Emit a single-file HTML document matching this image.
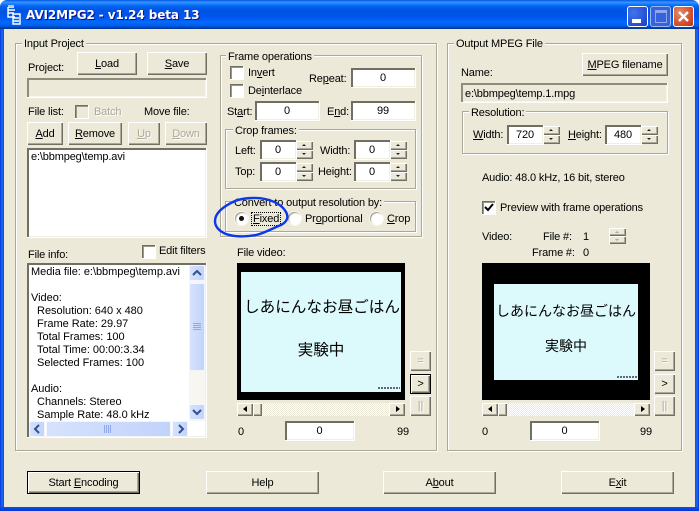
<!DOCTYPE html>
<html><head><meta charset="utf-8"><style>
html,body{margin:0;padding:0;background:#fff}
#w{position:relative;width:699px;height:511px;overflow:hidden;background:#ece9d8;font:11px/12px "Liberation Sans","Noto Sans CJK JP",sans-serif;letter-spacing:-.15px;color:#000;border-radius:7px 7px 0 0}
#w div{position:absolute;box-sizing:border-box;white-space:nowrap}
.tb{left:0;top:0;width:699px;height:29px;background:linear-gradient(#0058e6 0,#3a93ff 8%,#127dff 14%,#0262ee 22%,#0054e3 35%,#0055eb 56%,#005bf5 66%,#026afe 76%,#0062ef 86%,#0052d6 92%,#0040ab 96%,#003092 100%)}
.bl{left:0;top:29px;width:4px;height:482px;background:linear-gradient(90deg,#0831d9,#166aee 40%,#0855dd)}
.br{left:695px;top:29px;width:4px;height:482px;background:linear-gradient(270deg,#0831d9,#166aee 40%,#0855dd)}
.bb{left:0;top:507px;width:699px;height:4px;background:linear-gradient(#0855dd,#0831d9)}
.tt{left:26px;top:7px;color:#fff;font:bold 12px/16px "DejaVu Sans","Liberation Sans",sans-serif;letter-spacing:-.1px;text-shadow:1px 1px #0f1089}
.g{border:1px solid #aca899;box-shadow:1px 1px #fff,inset 1px 1px #fff}
.l{background:#ece9d8;padding:0 2px;height:12px}
.b{background:#ece9d8;text-align:center;box-shadow:inset 1px 1px #fff,inset -1px -1px #716f64,inset -2px -2px #aca899;display:flex;align-items:center;justify-content:center}
.dis{color:#aca899;text-shadow:1px 1px #fff}
.i{background:#fff;text-align:center;box-shadow:inset 1px 1px #716f64,inset 2px 2px #716f64,inset -1px -1px #f1efe2;border-right:1px solid #fff;border-bottom:1px solid #fff;line-height:21px}
.d{background:#ece9d8;box-shadow:inset 1px 1px #8f8c7c,inset 2px 2px #8f8c7c,inset -1px -1px #f7f6ee;border-right:1px solid #fff;border-bottom:1px solid #fff;text-align:left;padding:5px 0 0 4px}
.c{width:14px;height:14px;box-shadow:inset 1px 1px #716f64,inset 2px 2px #9a9786;border-right:1px solid #fff;border-bottom:1px solid #fff;background:#fff}
.r{width:13px;height:13px;border-radius:50%;background:#fff;box-shadow:inset 1px 1px 1px #a09c8c,0 0 0 1px #f8f7f0}
.s{background:#ece9d8;box-shadow:inset 1px 1px #fff,inset -1px -1px #716f64,inset -2px -2px #aca899}
.up:after{content:"";position:absolute;left:6px;top:3px;border:2.5px solid transparent;border-top:0;border-bottom:2.5px solid #222}
.dn:after{content:"";position:absolute;left:6px;top:3px;border:2.5px solid transparent;border-bottom:0;border-top:2.5px solid #222}
.dim:after{border-top-color:#aca899;border-bottom-color:#aca899}
.lf:after{content:"";position:absolute;left:6px;top:3px;border:3.5px solid transparent;border-left:0;border-right:4px solid #000}
.rt:after{content:"";position:absolute;left:7px;top:3px;border:3.5px solid transparent;border-right:0;border-left:4px solid #000}
.k{background:repeating-conic-gradient(#fff 0 25%,#ece9d8 0 50%) 0 0/2px 2px}
.v{background:#000}.y{background:#dcfafc;overflow:hidden;text-align:center;color:#000}
.xb{background:linear-gradient(90deg,#d6e2fd,#c2d3fb);border:1px solid #f4f6fe;border-radius:2px}
u{text-decoration:underline}
</style></head><body><div id="w">
<div class="tb"></div><div class="bl"></div><div class="br"></div><div class="bb"></div>
<svg style="position:absolute;left:6px;top:5px" width="16" height="20" viewBox="0 0 16 20"><path d="M2 2h6M2 5h7M2 2v10h7M2 8h6M7 9h7v10H7zM7 13h6M7 16h6" fill="none" stroke="#fff" stroke-width="1.4"/><path d="M2 0h6v2H2z" fill="#c8c8c8"/></svg>
<div class="tt">AVI2MPG2 - v1.24 beta 13</div>
<!-- window buttons -->
<div style="left:627px;top:6px;width:21px;height:21px;border:1px solid #fff;border-radius:3px;background:radial-gradient(circle at 30% 30%,#3f76ea,#2a53d8 60%,#1b3bc0)"><div style="left:4px;top:12px;width:9px;height:4px;background:#fff"></div></div>
<div style="left:650px;top:6px;width:21px;height:21px;border:1px solid #9db8f0;border-radius:3px;background:#3761dd"><div style="left:4px;top:3px;width:12px;height:13px;border:1px solid #8fa8ec;border-top-width:3px"></div></div>
<div style="left:673px;top:6px;width:21px;height:21px;border:1px solid #fff;border-radius:3px;background:radial-gradient(circle at 30% 30%,#e6896a,#d5512c 60%,#b9331a)"><svg style="position:absolute;left:3px;top:3px" width="13" height="13"><path d="M2 2l9 9M11 2l-9 9" stroke="#fff" stroke-width="2.4"/></svg></div>

<!-- Input Project -->
<div class="g" style="left:15px;top:43px;width:422px;height:408px"></div>
<div class="l" style="left:22px;top:38px">Input Project</div>
<div style="left:28px;top:62px">Project:</div>
<div class="b" style="left:77px;top:52px;width:60px;height:23px"><span><u>L</u>oad</span></div>
<div class="b" style="left:147px;top:52px;width:60px;height:23px"><span><u>S</u>ave</span></div>
<div class="d" style="left:27px;top:78px;width:180px;height:20px"></div>
<div style="left:28px;top:106px">File list:</div>
<div class="c" style="left:75px;top:105px;background:#ece9d8"></div>
<div class="dis" style="left:94px;top:106px">Batch</div>
<div style="left:144px;top:106px">Move file:</div>
<div class="b" style="left:27px;top:122px;width:36px;height:23px"><span><u>A</u>dd</span></div>
<div class="b" style="left:68px;top:122px;width:54px;height:23px"><span><u>R</u>emove</span></div>
<div class="b dis" style="left:128px;top:122px;width:32px;height:23px"><span><u>U</u>p</span></div>
<div class="b dis" style="left:165px;top:122px;width:42px;height:23px"><span><u>D</u>own</span></div>
<div class="i" style="left:27px;top:148px;width:180px;height:90px;text-align:left;padding:0 0 0 4px;line-height:19px">e:\bbmpeg\temp.avi</div>
<div style="left:28px;top:249px">File info:</div>
<div class="c" style="left:142px;top:245px"></div>
<div style="left:159px;top:245px">Edit filters</div>
<div class="i" style="left:27px;top:263px;width:180px;height:175px"></div>
<div style="left:31px;top:266px;line-height:13px;letter-spacing:-.03px;width:158px;height:155px;overflow:hidden">Media file: e:\bbmpeg\temp.avi<br><br>Video:<br>&nbsp;&nbsp;Resolution: 640 x 480<br>&nbsp;&nbsp;Frame Rate: 29.97<br>&nbsp;&nbsp;Total Frames: 100<br>&nbsp;&nbsp;Total Time: 00:00:3.34<br>&nbsp;&nbsp;Selected Frames: 100<br><br>Audio:<br>&nbsp;&nbsp;Channels: Stereo<br>&nbsp;&nbsp;Sample Rate: 48.0 kHz</div>
<!-- vertical scroll -->
<div style="left:189px;top:265px;width:16px;height:156px;background:#f7f6f0"></div>
<div class="xb" style="left:189px;top:265px;width:16px;height:16px"><svg style="position:absolute;left:2px;top:3px" width="10" height="8"><path d="M1 6l4-4 4 4" fill="none" stroke="#35508f" stroke-width="2"/></svg></div>
<div class="xb" style="left:189px;top:283px;width:16px;height:88px"><svg style="position:absolute;left:3px;top:39px" width="8" height="8"><path d="M0 .5h8M0 2.5h8M0 4.5h8M0 6.5h8" stroke="#8ea8e8"/></svg></div>
<div class="xb" style="left:189px;top:404px;width:16px;height:16px"><svg style="position:absolute;left:2px;top:3px" width="10" height="8"><path d="M1 2l4 4 4-4" fill="none" stroke="#35508f" stroke-width="2"/></svg></div>
<!-- horizontal scroll -->
<div class="xb" style="left:29px;top:421px;width:16px;height:16px"><svg style="position:absolute;left:3px;top:2px" width="8" height="10"><path d="M6 1L2 5l4 4" fill="none" stroke="#35508f" stroke-width="2"/></svg></div>
<div class="xb" style="left:46px;top:421px;width:125px;height:16px"><svg style="position:absolute;left:57px;top:3px" width="8" height="8"><path d="M.5 0v8M2.5 0v8M4.5 0v8M6.5 0v8" stroke="#8ea8e8"/></svg></div>
<div class="xb" style="left:172px;top:421px;width:16px;height:16px"><svg style="position:absolute;left:4px;top:2px" width="8" height="10"><path d="M2 1l4 4-4 4" fill="none" stroke="#35508f" stroke-width="2"/></svg></div>

<!-- Frame operations -->
<div class="g" style="left:220px;top:55px;width:202px;height:182px"></div>
<div class="l" style="left:226px;top:51px">Frame operations</div>
<div class="c" style="left:230px;top:66px"></div><div style="left:248px;top:67px">In<u>v</u>ert</div>
<div class="c" style="left:230px;top:84px"></div><div style="left:248px;top:85px">De<u>i</u>nterlace</div>
<div style="left:309px;top:73px">Re<u>p</u>eat:</div>
<div class="i" style="left:351px;top:68px;width:65px;height:20px">0</div>
<div style="left:227px;top:106px">St<u>a</u>rt:</div>
<div class="i" style="left:255px;top:101px;width:65px;height:20px">0</div>
<div style="left:327px;top:106px">E<u>n</u>d:</div>
<div class="i" style="left:351px;top:101px;width:65px;height:20px">99</div>
<div class="g" style="left:225px;top:129px;width:191px;height:60px"></div>
<div class="l" style="left:233px;top:125px">Crop frames:</div>
<div style="left:235px;top:145px">Left:</div>
<div class="i" style="left:260px;top:140px;width:37px;height:20px">0</div><div class="s up" style="left:296px;top:141px;width:17px;height:9px"></div><div class="s dn" style="left:296px;top:150px;width:17px;height:9px"></div>
<div style="left:320px;top:145px">Width:</div>
<div class="i" style="left:354px;top:140px;width:37px;height:20px">0</div><div class="s up" style="left:390px;top:141px;width:17px;height:9px"></div><div class="s dn" style="left:390px;top:150px;width:17px;height:9px"></div>
<div style="left:235px;top:166px">Top:</div>
<div class="i" style="left:260px;top:162px;width:37px;height:20px">0</div><div class="s up" style="left:296px;top:163px;width:17px;height:9px"></div><div class="s dn" style="left:296px;top:172px;width:17px;height:9px"></div>
<div style="left:318px;top:166px">Height:</div>
<div class="i" style="left:354px;top:162px;width:37px;height:20px">0</div><div class="s up" style="left:390px;top:163px;width:17px;height:9px"></div><div class="s dn" style="left:390px;top:172px;width:17px;height:9px"></div>
<div class="g" style="left:225px;top:201px;width:191px;height:31px"></div>
<div class="l" style="left:232px;top:197px">Convert to output resolution by:</div>
<div class="r" style="left:235px;top:212px"><div style="left:4px;top:4px;width:5px;height:5px;border-radius:50%;background:#111"></div></div>
<div style="left:252px;top:213px;outline:1px dotted #000;padding:0 1px"><u>F</u>ixed</div>
<div class="r" style="left:288px;top:212px"></div><div style="left:305px;top:213px">Pr<u>o</u>portional</div>
<div class="r" style="left:370px;top:212px"></div><div style="left:387px;top:213px"><u>C</u>rop</div>
<svg style="position:absolute;left:210px;top:192px" width="85" height="50"><path d="M25 9C33 6 46 5 55 7C64 9 72 13 76 20C79 25 77 30 71 33C63 36 55 41 46 43C36 45 24 45 16 42C9 39 5 35 5 29C5 22 12 15 25 9" fill="none" stroke="#0a38ee" stroke-width="2.4"/></svg>

<!-- File video -->
<div style="left:237px;top:247px">File video:</div>
<div class="v" style="left:237px;top:263px;width:168px;height:137px"></div>
<div class="y" style="left:241px;top:272px;width:160px;height:120px"></div>
<div style="left:242px;top:299px;width:160px;text-align:center;font-size:15.6px;line-height:18px;letter-spacing:0">しあにんなお昼ごはん</div>
<div style="left:241px;top:342px;width:160px;text-align:center;font-size:15.6px;line-height:18px;letter-spacing:0">実験中</div>
<div style="left:378px;top:387px;width:22px;height:2px;background:repeating-linear-gradient(90deg,#667 0 2px,#dcfafc 2px 3px)"></div>
<div class="k" style="left:237px;top:403px;width:168px;height:13px"></div>
<div class="s lf" style="left:237px;top:403px;width:16px;height:13px"></div>
<div class="s" style="left:253px;top:403px;width:9px;height:13px"></div>
<div class="s rt" style="left:389px;top:403px;width:16px;height:13px"></div>
<div style="left:238px;top:426px">0</div>
<div class="i" style="left:285px;top:421px;width:70px;height:20px">0</div>
<div style="left:397px;top:426px">99</div>
<div class="b dis" style="left:410px;top:351px;width:21px;height:20px"><span>=</span></div>
<div class="b" style="left:410px;top:374px;width:21px;height:20px;border:1px solid #000"><span>&gt;</span></div>
<div class="b dis" style="left:410px;top:396px;width:21px;height:20px"><span>||</span></div>

<!-- Output -->
<div class="g" style="left:447px;top:43px;width:235px;height:408px"></div>
<div class="l" style="left:454px;top:38px">Output MPEG File</div>
<div style="left:461px;top:67px">Name:</div>
<div class="b" style="left:582px;top:53px;width:86px;height:23px"><span><u>M</u>PEG filename</span></div>
<div class="d" style="left:461px;top:83px;width:207px;height:20px;padding-left:4px">e:\bbmpeg\temp.1.mpg</div>
<div class="g" style="left:462px;top:111px;width:206px;height:43px"></div>
<div class="l" style="left:469px;top:107px">Resolution:</div>
<div style="left:473px;top:129px"><u>W</u>idth:</div>
<div class="i" style="left:507px;top:125px;width:37px;height:20px">720</div><div class="s up" style="left:543px;top:126px;width:17px;height:9px"></div><div class="s dn" style="left:543px;top:135px;width:17px;height:9px"></div>
<div style="left:568px;top:129px"><u>H</u>eight:</div>
<div class="i" style="left:605px;top:125px;width:37px;height:20px">480</div><div class="s up" style="left:641px;top:126px;width:17px;height:9px"></div><div class="s dn" style="left:641px;top:135px;width:17px;height:9px"></div>
<div style="left:482px;top:172px">Audio: 48.0 kHz, 16 bit, stereo</div>
<div class="c" style="left:482px;top:201px"><svg style="position:absolute;left:2px;top:2px" width="10" height="10"><path d="M1 4l3 3 5-6" fill="none" stroke="#000" stroke-width="2"/></svg></div>
<div style="left:500px;top:202px">Preview with frame operations</div>
<div style="left:482px;top:231px">Video:</div>
<div style="left:543px;top:231px">File #:</div>
<div style="left:583px;top:231px">1</div>
<div class="s up dim" style="left:609px;top:228px;width:17px;height:8px"></div><div class="s dn dim" style="left:609px;top:236px;width:17px;height:8px"></div>
<div style="left:532px;top:247px">Frame #:</div>
<div style="left:583px;top:247px">0</div>
<div class="v" style="left:482px;top:263px;width:168px;height:137px"></div>
<div class="y" style="left:494px;top:284px;width:144px;height:96px"></div>
<div style="left:494px;top:303px;width:144px;text-align:center;font-size:14px;line-height:16px;letter-spacing:0">しあにんなお昼ごはん</div>
<div style="left:494px;top:338px;width:144px;text-align:center;font-size:14px;line-height:16px;letter-spacing:0">実験中</div>
<div style="left:617px;top:376px;width:20px;height:2px;background:repeating-linear-gradient(90deg,#667 0 2px,#dcfafc 2px 3px)"></div>
<div class="k" style="left:482px;top:403px;width:168px;height:13px"></div>
<div class="s lf" style="left:482px;top:403px;width:16px;height:13px"></div>
<div class="s" style="left:498px;top:403px;width:9px;height:13px"></div>
<div class="s rt" style="left:634px;top:403px;width:16px;height:13px"></div>
<div style="left:482px;top:426px">0</div>
<div class="i" style="left:530px;top:421px;width:70px;height:20px">0</div>
<div style="left:640px;top:426px">99</div>
<div class="b dis" style="left:654px;top:351px;width:21px;height:20px"><span>=</span></div>
<div class="b" style="left:654px;top:374px;width:21px;height:20px"><span>&gt;</span></div>
<div class="b dis" style="left:654px;top:396px;width:21px;height:20px"><span>||</span></div>

<!-- Bottom buttons -->
<div class="b" style="left:27px;top:471px;width:113px;height:23px;border:1px solid #000"><span>Start <u>E</u>ncoding</span></div>
<div class="b" style="left:206px;top:471px;width:113px;height:23px"><span>Help</span></div>
<div class="b" style="left:383px;top:471px;width:113px;height:23px"><span>A<u>b</u>out</span></div>
<div class="b" style="left:561px;top:471px;width:113px;height:23px"><span>E<u>x</u>it</span></div>
</div></body></html>
